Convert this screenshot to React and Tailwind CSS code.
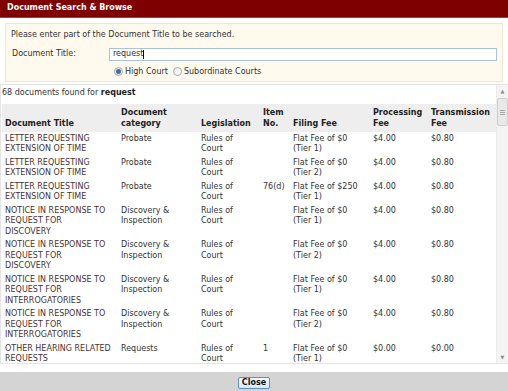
const rows = [
  { title: ["LETTER REQUESTING", "EXTENSION OF TIME"], cat: ["Probate"], item: "", fee: ["Flat Fee of $0", "(Tier 1)"], proc: "$4.00", trans: "$0.80" },
  { title: ["LETTER REQUESTING", "EXTENSION OF TIME"], cat: ["Probate"], item: "", fee: ["Flat Fee of $0", "(Tier 2)"], proc: "$4.00", trans: "$0.80" },
  { title: ["LETTER REQUESTING", "EXTENSION OF TIME"], cat: ["Probate"], item: "76(d)", fee: ["Flat Fee of $250", "(Tier 1)"], proc: "$4.00", trans: "$0.80" },
  { title: ["NOTICE IN RESPONSE TO", "REQUEST FOR", "DISCOVERY"], cat: ["Discovery &", "Inspection"], item: "", fee: ["Flat Fee of $0", "(Tier 1)"], proc: "$4.00", trans: "$0.80" },
  { title: ["NOTICE IN RESPONSE TO", "REQUEST FOR", "DISCOVERY"], cat: ["Discovery &", "Inspection"], item: "", fee: ["Flat Fee of $0", "(Tier 2)"], proc: "$4.00", trans: "$0.80" },
  { title: ["NOTICE IN RESPONSE TO", "REQUEST FOR", "INTERROGATORIES"], cat: ["Discovery &", "Inspection"], item: "", fee: ["Flat Fee of $0", "(Tier 1)"], proc: "$4.00", trans: "$0.80" },
  { title: ["NOTICE IN RESPONSE TO", "REQUEST FOR", "INTERROGATORIES"], cat: ["Discovery &", "Inspection"], item: "", fee: ["Flat Fee of $0", "(Tier 2)"], proc: "$4.00", trans: "$0.80" },
  { title: ["OTHER HEARING RELATED", "REQUESTS"], cat: ["Requests"], item: "1", fee: ["Flat Fee of $0", "(Tier 1)"], proc: "$0.00", trans: "$0.00" },
];

const Lines = ({ lines }) =>
  lines.map((l, i) => (
    <span key={i} className="block whitespace-nowrap">
      {l}
    </span>
  ));

const Radio = ({ checked }) => (
  <span className="inline-flex w-[9px] h-[9px] rounded-full border border-[#a4a9b0] bg-gradient-to-br from-[#e8eaec] to-[#ffffff] items-center justify-center">
    {checked && <span className="w-[5px] h-[5px] rounded-full bg-[#3f6d9c]" />}
  </span>
);

const Scrollbar = () => (
  <div className="w-[12px] shrink-0 bg-[#f4f4f4] border-l border-[#ececec] flex flex-col items-center">
    <div className="h-[12px] flex items-center justify-center text-[5px] text-[#8a8a8a]">▲</div>
    <div className="w-[11px] h-[28px] mt-[1px] rounded-[2px] border border-[#cfcfcf] bg-[#e9e9e9] flex flex-col items-center justify-center gap-[1px]">
      <span className="w-[5px] h-px bg-[#a8a8a8]" />
      <span className="w-[5px] h-px bg-[#a8a8a8]" />
      <span className="w-[5px] h-px bg-[#a8a8a8]" />
    </div>
    <div className="flex-1" />
    <div className="h-[12px] flex items-center justify-center text-[5px] text-[#8a8a8a]">▼</div>
  </div>
);

export default function App() {
  return (
    <div className="w-[508px] h-[391px] flex flex-col bg-white text-[8px] leading-[10.5px] text-[#333] font-['DejaVu_Sans',Verdana,sans-serif] overflow-hidden">
      <div className="h-[18px] shrink-0 bg-[#7f0000] border-b border-[#a83a3a] flex items-center px-[7px] text-white font-bold">
        Document Search &amp; Browse
      </div>

      <div className="mx-[5px] mt-[5px] h-[59px] shrink-0 border border-[#f1e4d0] bg-[#fff9ee] px-[5px] pt-[6px]">
        <div>Please enter part of the Document Title to be searched.</div>
        <div className="flex items-center mt-[7px]">
          <span className="w-[98px] pl-[1px]">Document Title:</span>
          <div className="flex-1 h-[13px] border border-[#a9c3de] bg-white flex items-center pl-[3px]">
            request<span className="w-px h-[9px] bg-black" />
          </div>
        </div>
        <div className="flex items-center mt-[6px] pl-[103px] gap-[2px]">
          <Radio checked />
          <span className="mr-[3px]">High Court</span>
          <Radio />
          <span>Subordinate Courts</span>
        </div>
      </div>

      <div className="mt-[2px] flex-1 min-h-0 flex border-t border-l border-b border-[#e4e4e4]">
        <div className="flex-1 min-w-0 overflow-hidden">
          <div className="pl-[1px] pt-[3px] h-[19px]">
            68 documents found for <b className="text-[#222]">request</b>
          </div>
          <table className="table-fixed border-collapse ml-[1px] w-[494px]">
            <colgroup>
              <col className="w-[116px]" />
              <col className="w-[80px]" />
              <col className="w-[62px]" />
              <col className="w-[30px]" />
              <col className="w-[80px]" />
              <col className="w-[58px]" />
              <col className="w-[68px]" />
            </colgroup>
            <thead>
              <tr className="bg-[#eeeeee] text-[#222] font-bold align-bottom">
                <th className="text-left font-bold px-[3px] pt-[4px] pb-[3px]">Document Title</th>
                <th className="text-left font-bold px-[3px] pt-[4px] pb-[3px]">
                  <Lines lines={["Document", "category"]} />
                </th>
                <th className="text-left font-bold px-[3px] pt-[4px] pb-[3px]">Legislation</th>
                <th className="text-left font-bold px-[3px] pt-[4px] pb-[3px]">
                  <Lines lines={["Item", "No."]} />
                </th>
                <th className="text-left font-bold px-[3px] pt-[4px] pb-[3px]">Filing Fee</th>
                <th className="text-left font-bold px-[3px] pt-[4px] pb-[3px]">
                  <Lines lines={["Processing", "Fee"]} />
                </th>
                <th className="text-left font-bold px-[3px] pt-[4px] pb-[3px]">
                  <Lines lines={["Transmission", "Fee"]} />
                </th>
              </tr>
            </thead>
            <tbody>
              {rows.map((r, i) => (
                <tr key={i} className="align-top">
                  <td className="px-[3px] py-[1.5px] text-[#4a3232]">
                    <Lines lines={r.title} />
                  </td>
                  <td className="px-[3px] py-[1.5px]">
                    <Lines lines={r.cat} />
                  </td>
                  <td className="px-[3px] py-[1.5px]">
                    <Lines lines={["Rules of", "Court"]} />
                  </td>
                  <td className="px-[3px] py-[1.5px]">{r.item}</td>
                  <td className="px-[3px] py-[1.5px]">
                    <Lines lines={r.fee} />
                  </td>
                  <td className="px-[3px] py-[1.5px]">{r.proc}</td>
                  <td className="px-[3px] py-[1.5px]">{r.trans}</td>
                </tr>
              ))}
            </tbody>
          </table>
        </div>
        <Scrollbar />
      </div>

      <div className="h-[19px] mt-[8px] shrink-0 bg-[#d4d4d4] flex items-start justify-center pt-[5px]">
        <button className="h-[12px] px-[3px] border border-[#5c8fc4] rounded-[2px] bg-gradient-to-b from-[#f7fbff] to-[#dbe8f5] text-[#111] font-bold text-[8px] leading-[10px] font-['DejaVu_Sans',Verdana,sans-serif]">
          Close
        </button>
      </div>
    </div>
  );
}
